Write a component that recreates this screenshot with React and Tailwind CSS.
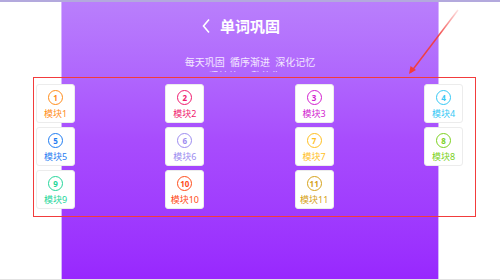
import React from 'react';

const modules = [
  { n: 1, color: '#ff8c1a' },
  { n: 2, color: '#f0196e' },
  { n: 3, color: '#d21ecf' },
  { n: 4, color: '#35c8f5' },
  { n: 5, color: '#1f7cf2' },
  { n: 6, color: '#9d8cf0' },
  { n: 7, color: '#ffbf1f' },
  { n: 8, color: '#7cd11f' },
  { n: 9, color: '#24d69a' },
  { n: 10, color: '#ff4d1a' },
  { n: 11, color: '#d6a21a' },
];

function ModuleCard({ n, color }) {
  return (
    <div className="w-[39px] h-[39px] bg-white rounded-[3px] border border-[#ececec] flex flex-col items-center pt-[5px]">
      <div
        className="w-[15px] h-[15px] rounded-full border-[1.5px] flex items-center justify-center text-[8px] font-bold leading-none"
        style={{ borderColor: color, color }}
      >
        {n}
      </div>
      <div className="mt-[3px] text-[9px] leading-[12px]" style={{ color }}>
        模块{n}
      </div>
    </div>
  );
}

export default function App() {
  return (
    <div
      className="relative w-[500px] h-[280px] bg-white overflow-hidden"
      style={{ fontFamily: '"Noto Sans", "Noto Sans CJK SC", sans-serif' }}
    >
      <div className="h-[2px] bg-[#b3a9dd]" />
      <div className="ml-[61px] w-[378px] h-[277px] bg-gradient-to-b from-[#b97ffc] via-[#a84cfd] to-[#9827fe] border-x border-[#d6b4ff]">
        <div className="h-[48px] flex items-center justify-center text-white">
          <svg width="10" height="16" viewBox="0 0 10 16" className="mr-[9px]">
            <path d="M8 1.5 L2.5 8 L8 14.5" fill="none" stroke="white" strokeWidth="1.6" />
          </svg>
          <span className="text-[15px] font-bold">单词巩固</span>
          <div className="w-[19px]" />
        </div>
        <div className="mt-[5px] text-center text-[10px] leading-[14px] text-white/85">
          每天巩固&nbsp;&nbsp;循序渐进&nbsp;&nbsp;深化记忆
        </div>
        <div className="h-[3px] overflow-hidden text-center text-[10px] leading-[14px] text-white/80">
          坚持练习&nbsp;熟能生巧
        </div>
        <div className="mt-[12px] -ml-[26px] w-[427px] grid grid-cols-[39px_39px_39px_39px] justify-between gap-y-[4px]">
          {modules.map((m) => (
            <ModuleCard key={m.n} n={m.n} color={m.color} />
          ))}
        </div>
      </div>
      <div className="h-[1px] bg-[#e2e2e2]" />

      <div className="absolute left-[33px] top-[77px] w-[443px] h-[140px] border-[1.5px] border-[#f23c3c]" />
      <svg className="absolute left-0 top-0" width="500" height="280">
        <defs>
          <linearGradient id="ar" x1="458" y1="10" x2="410" y2="73" gradientUnits="userSpaceOnUse">
            <stop offset="0" stopColor="#f23c3c" stopOpacity="0.15" />
            <stop offset="0.4" stopColor="#f23c3c" stopOpacity="0.9" />
            <stop offset="1" stopColor="#f23c3c" />
          </linearGradient>
        </defs>
        <line x1="458" y1="10" x2="411" y2="72" stroke="url(#ar)" strokeWidth="1.5" />
        <path d="M409 74 L410.5 66 L416 70 Z" fill="#f23c3c" />
      </svg>
    </div>
  );
}
